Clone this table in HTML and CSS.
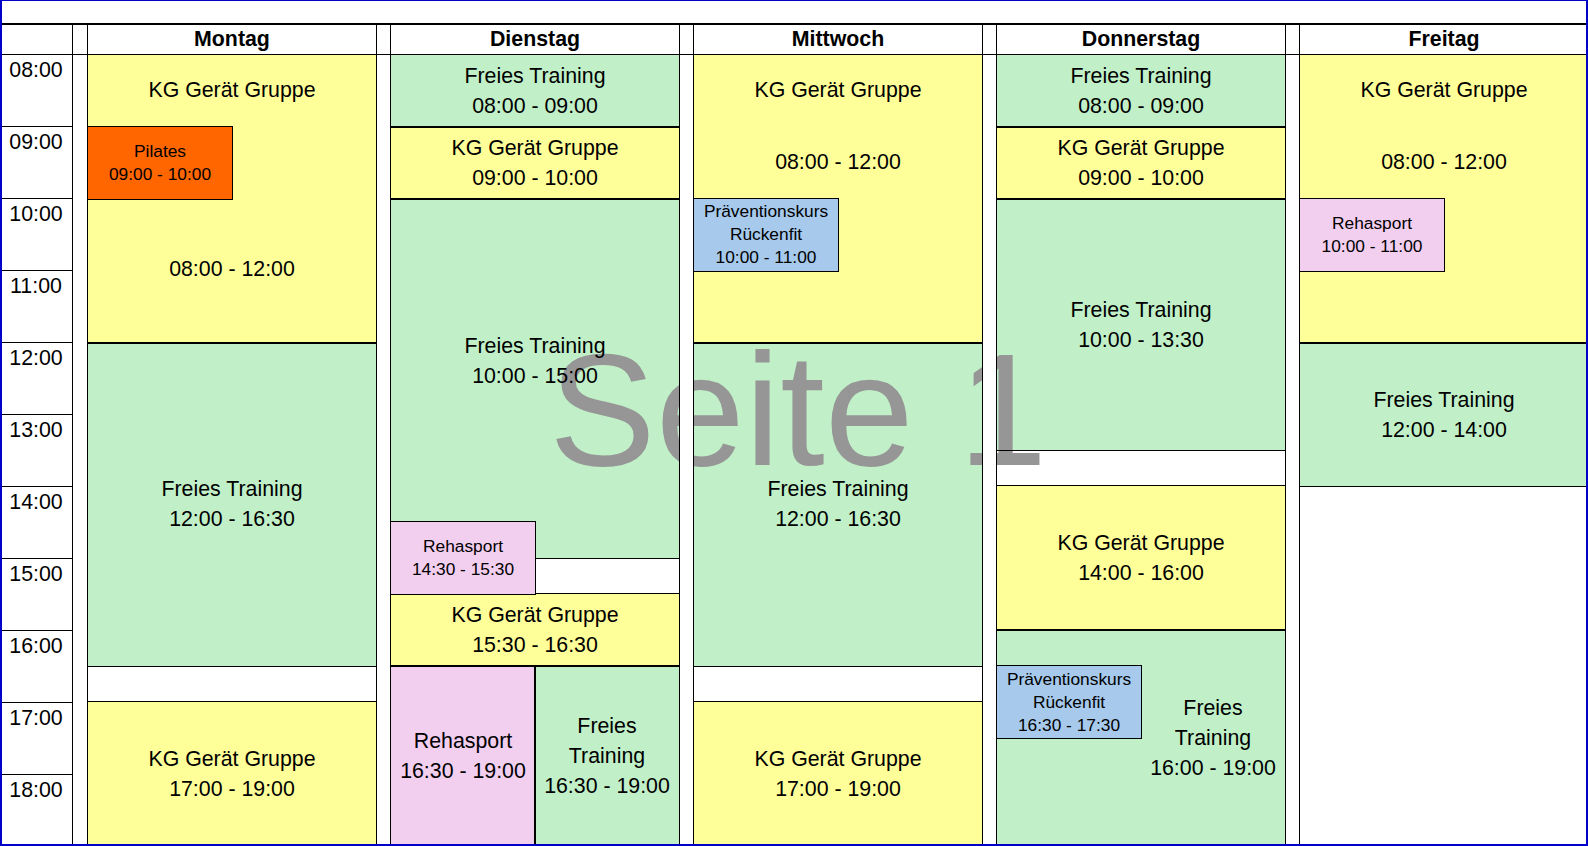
FILE: index.html
```html
<!DOCTYPE html>
<html lang="de">
<head>
<meta charset="utf-8">
<title>Kursplan</title>
<link rel="stylesheet" href="styles.css">
</head>
<body>
<div class="page">
  <div class="topbar"></div>
  <div class="sheet">
    <div class="hd"></div>
    <div class="hd"></div>
    <div class="hd">Montag</div>
    <div class="hd"></div>
    <div class="hd">Dienstag</div>
    <div class="hd"></div>
    <div class="hd">Mittwoch</div>
    <div class="hd"></div>
    <div class="hd">Donnerstag</div>
    <div class="hd"></div>
    <div class="hd">Freitag</div>

    <div class="times">
      <div class="tm">08:00</div>
      <div class="tm">09:00</div>
      <div class="tm">10:00</div>
      <div class="tm">11:00</div>
      <div class="tm">12:00</div>
      <div class="tm">13:00</div>
      <div class="tm">14:00</div>
      <div class="tm">15:00</div>
      <div class="tm">16:00</div>
      <div class="tm">17:00</div>
      <div class="tm">18:00</div>
    </div>
    <div class="gapcol"></div>

    <!-- Montag -->
    <div class="day">
      <div class="ev y top" style="grid-row:1/9"><span class="t">KG Gerät Gruppe</span><span class="t m149">08:00 - 12:00</span></div>
      <div class="ev g" style="grid-row:9/18"><span class="t">Freies Training</span><span class="t">12:00 - 16:30</span></div>
      <div class="ev y" style="grid-row:19/23"><span class="t">KG Gerät Gruppe</span><span class="t">17:00 - 19:00</span></div>
      <div class="ev ov o" style="grid-row:3/5"><span class="t">Pilates</span><span class="t">09:00 - 10:00</span></div>
    </div>
    <div class="gapcol"></div>

    <!-- Dienstag -->
    <div class="day">
      <div class="ev g" style="grid-row:1/3"><span class="t">Freies Training</span><span class="t">08:00 - 09:00</span></div>
      <div class="ev y" style="grid-row:3/5"><span class="t">KG Gerät Gruppe</span><span class="t">09:00 - 10:00</span></div>
      <div class="ev g pb36" style="grid-row:5/15"><span class="t">Freies Training</span><span class="t">10:00 - 15:00</span></div>
      <div class="ev y" style="grid-row:16/18"><span class="t">KG Gerät Gruppe</span><span class="t">15:30 - 16:30</span></div>
      <div class="ev p c1" style="grid-row:18/23"><span class="t">Rehasport</span><span class="t">16:30 - 19:00</span></div>
      <div class="ev g c2" style="grid-row:18/23"><span class="t">Freies</span><span class="t">Training</span><span class="t">16:30 - 19:00</span></div>
      <div class="ev ov p" style="grid-row:14/16"><span class="t">Rehasport</span><span class="t">14:30 - 15:30</span></div>
    </div>
    <div class="gapcol"></div>

    <!-- Mittwoch -->
    <div class="day">
      <div class="ev y top" style="grid-row:1/9"><span class="t">KG Gerät Gruppe</span><span class="t m42">08:00 - 12:00</span></div>
      <div class="ev g" style="grid-row:9/18"><span class="t">Freies Training</span><span class="t">12:00 - 16:30</span></div>
      <div class="ev y" style="grid-row:19/23"><span class="t">KG Gerät Gruppe</span><span class="t">17:00 - 19:00</span></div>
      <div class="ev ov b" style="grid-row:5/7"><span class="t">Präventionskurs</span><span class="t">Rückenfit</span><span class="t">10:00 - 11:00</span></div>
    </div>
    <div class="gapcol"></div>

    <!-- Donnerstag -->
    <div class="day">
      <div class="ev g" style="grid-row:1/3"><span class="t">Freies Training</span><span class="t">08:00 - 09:00</span></div>
      <div class="ev y" style="grid-row:3/5"><span class="t">KG Gerät Gruppe</span><span class="t">09:00 - 10:00</span></div>
      <div class="ev g" style="grid-row:5/12"><span class="t">Freies Training</span><span class="t">10:00 - 13:30</span></div>
      <div class="ev y" style="grid-row:13/17"><span class="t">KG Gerät Gruppe</span><span class="t">14:00 - 16:00</span></div>
      <div class="ev g rt" style="grid-row:17/23"><span class="t">Freies</span><span class="t">Training</span><span class="t">16:00 - 19:00</span></div>
      <div class="ev ov b" style="grid-row:18/20"><span class="t">Präventionskurs</span><span class="t">Rückenfit</span><span class="t">16:30 - 17:30</span></div>
    </div>
    <div class="gapcol"></div>

    <!-- Freitag -->
    <div class="day">
      <div class="ev y top" style="grid-row:1/9"><span class="t">KG Gerät Gruppe</span><span class="t m42">08:00 - 12:00</span></div>
      <div class="ev g" style="grid-row:9/13"><span class="t">Freies Training</span><span class="t">12:00 - 14:00</span></div>
      <div class="ev ov p" style="grid-row:5/7"><span class="t">Rehasport</span><span class="t">10:00 - 11:00</span></div>
    </div>
  </div>
  <div class="wm">Seite 1</div>
  <div class="frame"></div>
</div>
</body>
</html>
```

FILE: styles.css
```css
* { box-sizing: border-box; }

html, body {
  margin: 0;
  padding: 0;
}

body {
  width: 1588px;
  height: 846px;
  overflow: hidden;
  background: #fff;
  color: #000;
  font-family: "Liberation Sans", Arial, sans-serif;
}

.page {
  position: relative;
  width: 1588px;
  height: 846px;
}

.frame {
  position: absolute;
  inset: 0;
  border: 2px solid #0000c8;
  border-top-width: 1px;
  z-index: 5;
  pointer-events: none;
}

.topbar {
  height: 25px;
  background: #fff;
  border-bottom: 2px solid #000;
}

.sheet {
  display: grid;
  grid-template-columns: 72px 14px 288px 13px 288px 13px 288px 13px 288px 13px 288px;
  grid-template-rows: 29px 791px;
  gap: 1px;
  background: #000;
}

.hd {
  background: #fff;
  display: flex;
  align-items: center;
  justify-content: center;
  font-weight: bold;
  font-size: 21.33px;
  line-height: 29px;
}

.times {
  display: grid;
  grid-template-rows: repeat(11, minmax(0, 1fr));
  gap: 1px;
  background: #000;
}

.tm {
  background: #fff;
  text-align: center;
  font-size: 21.33px;
  line-height: 29px;
  padding-top: 1px;
}

.gapcol {
  background: #fff;
  position: relative;
  z-index: 2;
  box-shadow: -1px 0 0 #000, 1px 0 0 #000;
}

.day {
  display: grid;
  grid-template-rows: repeat(22, minmax(0, 1fr));
  grid-template-columns: 1fr 1fr;
  background: #fff;
}

.ev {
  position: relative;
  grid-column: 1 / 3;
  display: flex;
  flex-direction: column;
  align-items: center;
  justify-content: center;
  text-align: center;
  font-size: 21.33px;
  line-height: 30px;
  min-height: 0;
}

.ev::after {
  content: "";
  position: absolute;
  inset: -1px;
  border: 1px solid #000;
  z-index: 2;
  pointer-events: none;
}

.ev .t {
  position: relative;
  z-index: 2;
  display: block;
  white-space: nowrap;
}

.ov {
  grid-column: 1;
  z-index: 3;
  font-size: 17.33px;
  line-height: 23px;
}

.c1 { grid-column: 1; }
.c2 { grid-column: 2; }

.y { background: #ffff99; }
.g { background: #c1f0c8; }
.o { background: #ff6600; }
.p { background: #f2ceef; }
.b { background: #a6c9ec; }

.top {
  justify-content: flex-start;
  padding-top: 20px;
}

.m149 { margin-top: 149px; }
.m42 { margin-top: 42px; }

.pb36 { padding-bottom: 36px; }

.rt { padding-left: 50%; }

.wm {
  position: absolute;
  left: 549px;
  top: 330px;
  font-family: "Liberation Sans", Arial, sans-serif;
  font-size: 160px;
  line-height: 160px;
  color: #969696;
  white-space: nowrap;
  z-index: 1;
  pointer-events: none;
}
```
